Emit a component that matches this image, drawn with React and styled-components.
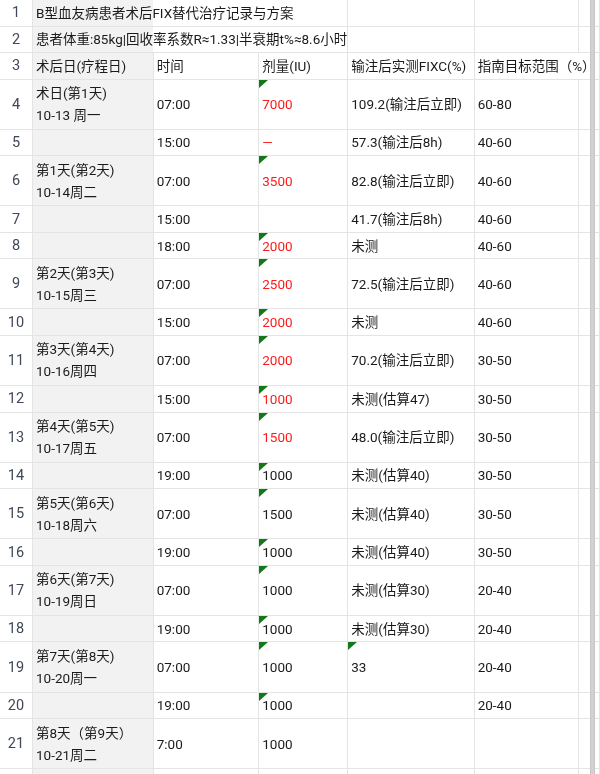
import React from 'react';
import styled, { createGlobalStyle } from 'styled-components';

const FONT = '"Roboto", "Noto Sans CJK SC", "Noto Sans", sans-serif';

const Global = createGlobalStyle`
  html, body { margin: 0; padding: 0; background: #fff; overflow: hidden; }
  body { font-family: ${FONT}; }
`;

const COLS = '33px 120.7px 105.6px 89px 126.4px 104.6px 1fr';
const LINE = '#e4e4e4';

const Sheet = styled.div`
  position: relative;
  height: 774px;
  overflow: hidden;
  font-family: ${FONT};
  will-change: transform;
  -webkit-font-smoothing: antialiased;
`;

const Row = styled.div`
  display: grid;
  grid-template-columns: ${COLS};
  height: ${(p) => (p.$tall ? '50.15px' : '26.5px')};
`;

const RowNum = styled.div`
  display: flex;
  align-items: center;
  justify-content: center;
  border-bottom: 1px solid ${LINE};
  border-right: 1px solid ${LINE};
  color: #3e4858;
  font-size: 14.5px;
`;

const Cell = styled.div`
  position: relative;
  display: flex;
  flex-direction: column;
  justify-content: center;
  min-width: 0;
  padding-left: 3px;
  box-sizing: border-box;
  grid-column: span ${(p) => p.$span || 1};
  border-bottom: 1px solid ${LINE};
  border-right: 1px solid ${LINE};
  background: ${(p) =>
    p.$banner
      ? 'linear-gradient(90deg, #f2f2f2 120px, #fff 120px)'
      : p.$shade
      ? '#f2f2f2'
      : '#fff'};
  color: ${(p) => (p.$red ? '#ff1a1a' : '#1a1a1a')};
  font-size: 13.5px;
  line-height: 22px;
  white-space: nowrap;
`;

const Flag = styled.span`
  position: absolute;
  top: 0;
  left: 0;
  width: 0;
  height: 0;
  border-top: 8px solid #12791a;
  border-right: 9px solid transparent;
`;

const Scrollbar = styled.div`
  position: absolute;
  top: 0;
  left: 590px;
  width: 3px;
  height: 100%;
  background: #d2d2d2;
  border-left: 1px solid #c6c6c6;
  border-right: 1px solid #c6c6c6;
`;

const rows = [
  { a: ['术日(第1天)', '10-13 周一'], b: '07:00', c: '7000', cr: 1, cf: 1, d: '109.2(输注后立即)', e: '60-80' },
  { b: '15:00', c: '—', cr: 1, d: '57.3(输注后8h)', e: '40-60' },
  { a: ['第1天(第2天)', '10-14周二'], b: '07:00', c: '3500', cr: 1, cf: 1, d: '82.8(输注后立即)', e: '40-60' },
  { b: '15:00', c: '', d: '41.7(输注后8h)', e: '40-60' },
  { b: '18:00', c: '2000', cr: 1, cf: 1, d: '未测', e: '40-60' },
  { a: ['第2天(第3天)', '10-15周三'], b: '07:00', c: '2500', cr: 1, cf: 1, d: '72.5(输注后立即)', e: '40-60' },
  { b: '15:00', c: '2000', cr: 1, cf: 1, d: '未测', e: '40-60' },
  { a: ['第3天(第4天)', '10-16周四'], b: '07:00', c: '2000', cr: 1, cf: 1, d: '70.2(输注后立即)', e: '30-50' },
  { b: '15:00', c: '1000', cr: 1, cf: 1, d: '未测(估算47)', e: '30-50' },
  { a: ['第4天(第5天)', '10-17周五'], b: '07:00', c: '1500', cr: 1, cf: 1, d: '48.0(输注后立即)', e: '30-50' },
  { b: '19:00', c: '1000', cf: 1, d: '未测(估算40)', e: '30-50' },
  { a: ['第5天(第6天)', '10-18周六'], b: '07:00', c: '1500', cf: 1, d: '未测(估算40)', e: '30-50' },
  { b: '19:00', c: '1000', cf: 1, d: '未测(估算40)', e: '30-50' },
  { a: ['第6天(第7天)', '10-19周日'], b: '07:00', c: '1000', cf: 1, d: '未测(估算30)', e: '20-40' },
  { b: '19:00', c: '1000', cf: 1, d: '未测(估算30)', e: '20-40' },
  { a: ['第7天(第8天)', '10-20周一'], b: '07:00', c: '1000', cf: 1, d: '33', df: 1, e: '20-40' },
  { b: '19:00', c: '1000', cf: 1, d: '', e: '20-40' },
  { a: ['第8天（第9天）', '10-21周二'], b: '7:00', c: '1000', d: '', e: '' },
];

export default function App() {
  return (
    <Sheet>
      <Global />
      <Row>
        <RowNum>1</RowNum>
        <Cell $span={3} $banner>B型血友病患者术后FIX替代治疗记录与方案</Cell>
        <Cell />
        <Cell />
        <Cell />
      </Row>
      <Row>
        <RowNum>2</RowNum>
        <Cell $span={3} $banner>患者体重:85kg|回收率系数R≈1.33|半衰期t%≈8.6小时</Cell>
        <Cell />
        <Cell />
        <Cell />
      </Row>
      <Row>
        <RowNum>3</RowNum>
        <Cell $shade>术后日(疗程日)</Cell>
        <Cell>时间</Cell>
        <Cell>剂量(IU)</Cell>
        <Cell>输注后实测FIXC(%)</Cell>
        <Cell $span={2}>指南目标范围（%）</Cell>
      </Row>
      {rows.map((r, i) => (
        <Row key={i} $tall={!!r.a}>
          <RowNum>{i + 4}</RowNum>
          <Cell $shade>
            {r.a && r.a.map((t) => <div key={t}>{t}</div>)}
          </Cell>
          <Cell>{r.b}</Cell>
          <Cell $red={!!r.cr}>
            {r.cf ? <Flag /> : null}
            {r.c}
          </Cell>
          <Cell>
            {r.df ? <Flag /> : null}
            {r.d}
          </Cell>
          <Cell>{r.e}</Cell>
          <Cell />
        </Row>
      ))}
      <Row>
        <RowNum />
        <Cell $shade />
        <Cell />
        <Cell />
        <Cell />
        <Cell />
        <Cell />
      </Row>
      <Scrollbar />
    </Sheet>
  );
}
